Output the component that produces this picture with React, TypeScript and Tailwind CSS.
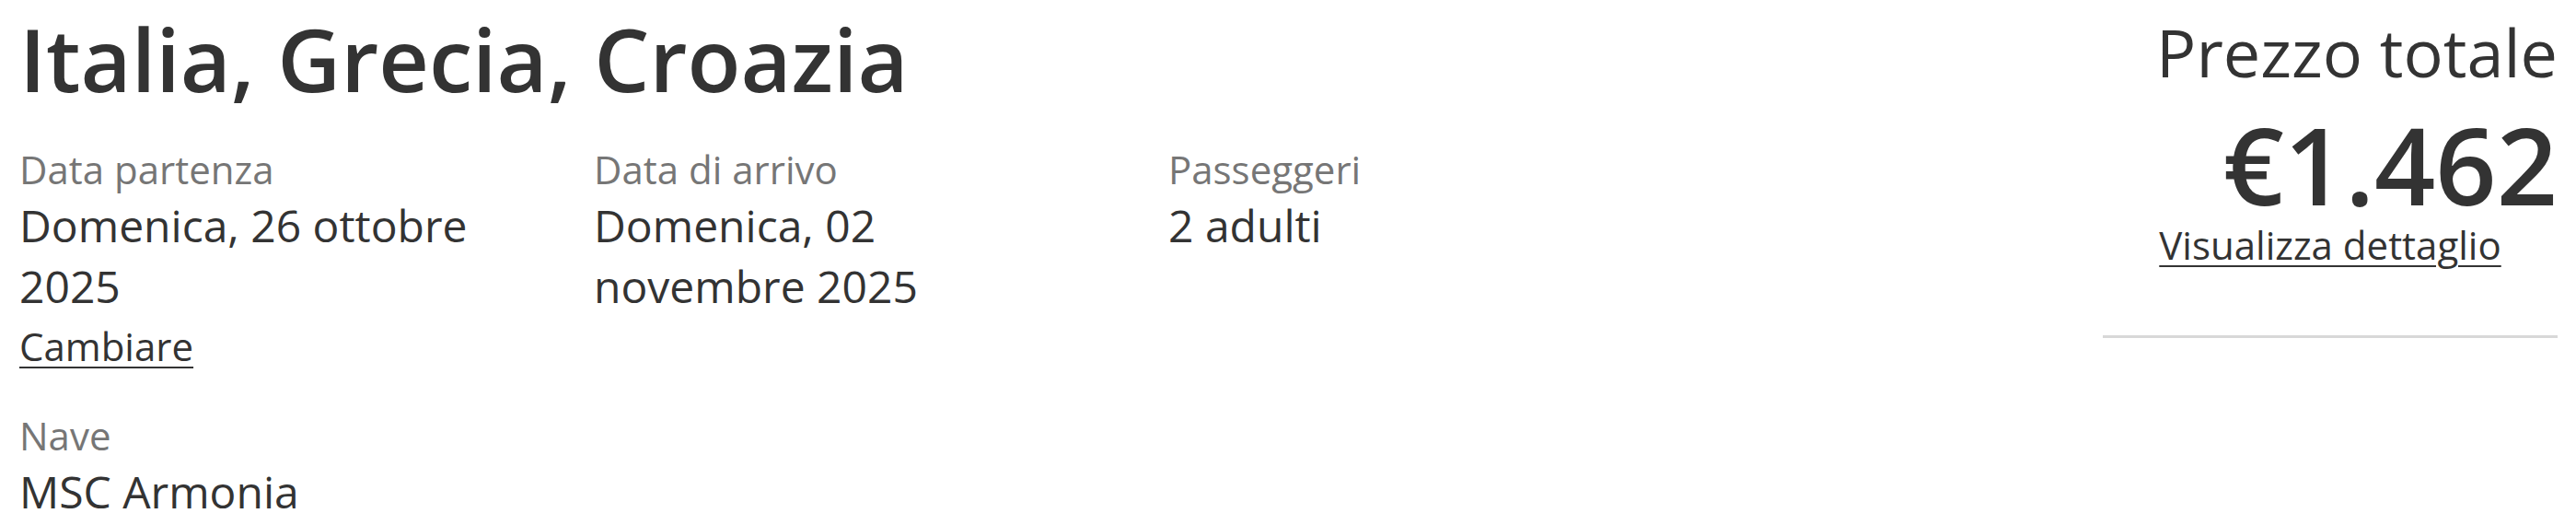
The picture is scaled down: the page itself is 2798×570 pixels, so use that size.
import React from "react";

const font = { fontFamily: '"Open Sans", "Noto Sans", sans-serif' };

function Field({
  label,
  value,
  link,
}: {
  label: string;
  value: string;
  link?: string;
}) {
  return (
    <div className="flex flex-col items-start">
      <div className="text-[42px] leading-[58px] text-[#767676]">{label}</div>
      <div className="-mt-[1px] text-[48px] leading-[66px] text-[#333333]">{value}</div>
      {link && (
        <a
          href="#"
          className="mt-[3px] text-[42px] leading-[58px] text-[#333333] underline decoration-2 underline-offset-[6px]"
        >
          {link}
        </a>
      )}
    </div>
  );
}

export default function App() {
  return (
    <div className="w-full min-h-[570px] bg-white" style={font}>
      <div className="flex justify-between pl-[21px] pr-[20px]">
        <div className="flex flex-col">
          <h1 className="mt-[6px] text-[95px] leading-[114px] font-semibold text-[#333333]">
            Italia, Grecia, Croazia
          </h1>
          <div className="mt-[35px] grid grid-cols-[515px_515px_515px] gap-x-[109px] gap-y-[39px]">
            <Field label="Data partenza" value="Domenica, 26 ottobre 2025" link="Cambiare" />
            <Field label="Data di arrivo" value="Domenica, 02 novembre 2025" />
            <Field label="Passeggeri" value="2 adulti" />
            <Field label="Nave" value="MSC Armonia" />
          </div>
        </div>
        <div className="flex w-[494px] flex-col pt-[13px]">
          <div className="text-right text-[72px] leading-[86px] text-[#333333]">Prezzo totale</div>
          <div className="mt-[29px] text-right text-[116px] leading-[100px] font-semibold text-[#333333]">
            €1.462
          </div>
          <div className="mt-[9px] flex justify-center">
            <a
              href="#"
              className="text-[42px] leading-[58px] text-[#333333] underline decoration-2 underline-offset-[6px]"
            >
              Visualizza dettaglio
            </a>
          </div>
          <div className="mt-[69px] h-[3px] bg-[#d8d8d8]" />
        </div>
      </div>
    </div>
  );
}
